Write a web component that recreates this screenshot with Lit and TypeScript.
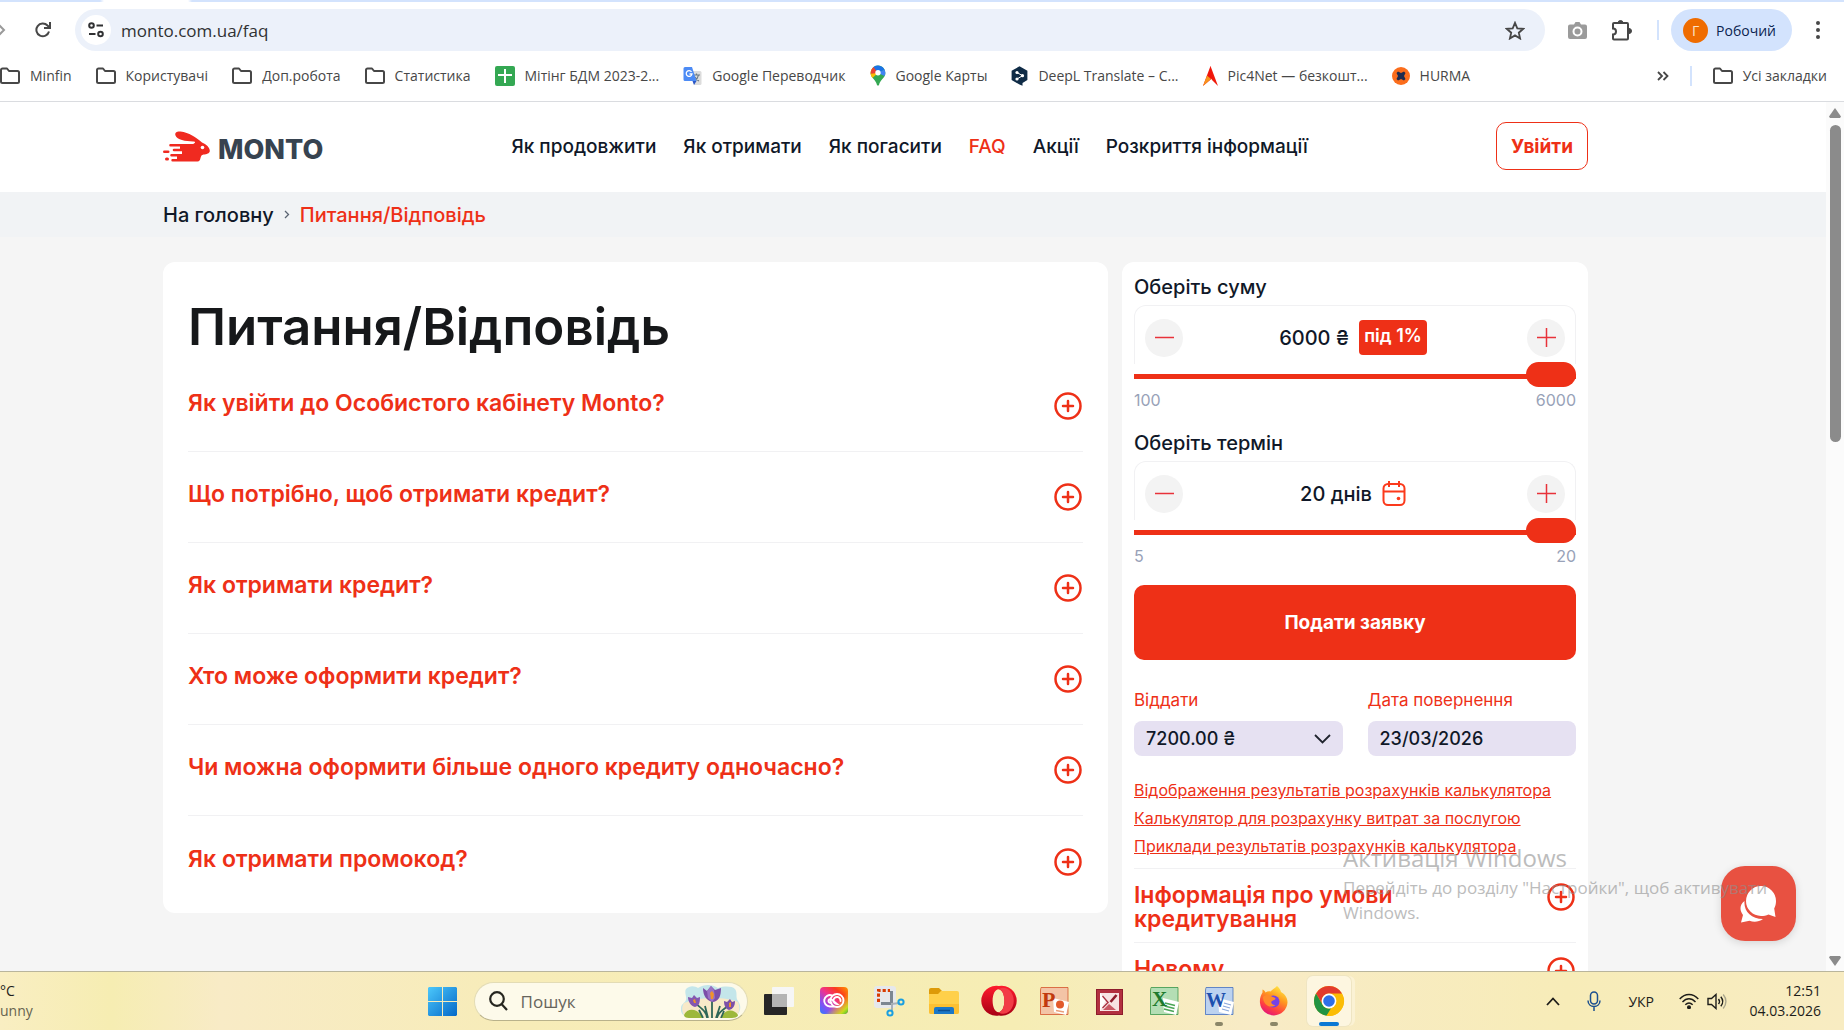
import { LitElement, html, css, svg } from "lit";
import { customElement, property } from "lit/decorators.js";

const folder = html`<svg width="20" height="18" viewBox="0 0 20 18" fill="none" stroke="#474747" stroke-width="2" stroke-linejoin="round"><path d="M1 14.500V3a1.500 1.500 0 0 1 1.500-1.500H7l2 2.500h8.500A1.500 1.500 0 0 1 19 5.500v9a1.500 1.500 0 0 1-1.500 1.500h-15A1.500 1.500 0 0 1 1 14.500z"/></svg>`;

const bookmarks = [
  { text: "Minfin", icon: folder },
  { text: "Користувачі", icon: folder },
  { text: "Доп.робота", icon: folder },
  { text: "Статистика", icon: folder },
  {
    text: "Мітінг БДМ 2023-2...",
    icon: html`<svg width="20" height="20" viewBox="0 0 20 20"><rect width="20" height="20" rx="2" fill="#34a853"/><path d="M9 3h2v5h6v2h-6v7H9v-7H3V8h6z" fill="#fff"/></svg>`,
  },
  {
    text: "Google Переводчик",
    icon: html`<svg width="19" height="20" viewBox="0 0 19 20"><path d="M8 5h9a1.500 1.500 0 0 1 1.500 1.500v11A1.500 1.500 0 0 1 17 19h-6z" fill="#dcdcdc"/><path d="M10 9h7M13.500 7.500V9M15.500 9c-.5 3-2.500 5-4 6M12 11c1 2 2.500 3.500 4 4" stroke="#6b7a86" stroke-width="1.200" fill="none"/><path d="M2 1h7l4.500 14H2A1.500 1.500 0 0 1 .5 13.500v-11A1.500 1.500 0 0 1 2 1z" fill="#4c8bf5"/><path d="M9.500 15h4L11 19z" fill="#2a56c6"/><path d="M8.500 5.800A2.900 2.900 0 1 0 9 8H6.500" stroke="#fff" stroke-width="1.300" fill="none"/></svg>`,
  },
  {
    text: "Google Карты",
    icon: html`<svg width="16" height="21" viewBox="0 0 16 21"><path d="M8 .5A7.400 7.400 0 0 1 15.400 8c0 5-5.200 6.500-6.400 12-.3.800-1.700.8-2 0C5.800 14.500.6 13 .6 8A7.400 7.400 0 0 1 8 .5z" fill="#34a853"/><path d="M2.400 3.200 8 8l-5.600 5C1.300 11.500.6 10 .6 8c0-1.800.7-3.500 1.800-4.800z" fill="#fbbc04"/><path d="M2.400 3.200A7.300 7.300 0 0 1 4 1.800L8 8l-7.300.8a8 8 0 0 1 1.700-5.600z" fill="#ea4335"/><path d="M3.600 2A7.400 7.400 0 0 1 14.500 4.500L8 8z" fill="#1a73e8"/><path d="M14.500 4.500c1.300 2.700.9 4.800 0 6.500L8 8z" fill="#4285f4"/><circle cx="8" cy="7.800" r="2.700" fill="#fff"/></svg>`,
  },
  {
    text: "DeepL Translate – C...",
    icon: html`<svg width="17" height="20" viewBox="0 0 17 20"><path d="M8.500.3 16.400 4.800v9.300L11.500 17v2.800L8.500 18.500.6 14V4.800z" fill="#0f2b46"/><path d="M6 6.500l5.500 3.200L6 13" stroke="#fff" stroke-width="1" fill="none"/><circle cx="6" cy="6.500" r="1.600" fill="#fff"/><circle cx="11.500" cy="9.700" r="1.600" fill="#fff"/><circle cx="6" cy="13" r="1.600" fill="#fff"/></svg>`,
  },
  {
    text: "Pic4Net — безкошт...",
    icon: html`<svg width="15" height="20" viewBox="0 0 15 20"><path d="M7.500 0 15 20l-6-6-3-6z" fill="#f01a0a"/><path d="M7.500 0 9.500 12 0 20z" fill="#f1140a"/><path d="M4 9.500 8 13 0 20z" fill="#f7941d"/></svg>`,
  },
  {
    text: "HURMA",
    icon: html`<svg width="18" height="18" viewBox="0 0 18 18"><circle cx="9" cy="9" r="9" fill="#fb6d1c"/><path d="M4.500 6 6 4.500l3 1.500 3-1.500L13.500 6 12 9l1.500 3-1.500 1.500L9 12l-3 1.500L4.500 12 6 9z" fill="#1d2b4f"/></svg>`,
  },
];

const officeDoc = (main: string, light: string) =>
  svg`<path d="M3 1h26v28H1V5z" fill="${light}"/><path d="M2 1.500h27v27H1.500V4z" fill="none" stroke="${main}" stroke-opacity=".7"/><path d="M14 12l16 4-3 13-12-3z" fill="#fff"/>`;

const apps = [
  {
    name: "Подання завдань",
    state: "",
    art: svg`<rect x="0" y="8" width="23" height="21" rx="1" fill="#262626"/><rect x="8" y="1" width="22" height="20" rx="1" fill="#f6f6f6"/><path d="M8 8h15v13H8z" fill="#b4b4b4"/>`,
  },
  {
    name: "Creative Cloud",
    state: "",
    art: svg`<defs><linearGradient id="cc" x1="0" y1="1" x2="1" y2="0"><stop offset="0" stop-color="#2f7bff"/><stop offset=".25" stop-color="#8a4df0"/><stop offset=".5" stop-color="#f0328c"/><stop offset=".75" stop-color="#fb3b1e"/><stop offset="1" stop-color="#ff9a00"/></linearGradient><linearGradient id="cc2" x1=".3" y1=".3" x2="1" y2="1"><stop offset=".4" stop-color="#ffd500" stop-opacity="0"/><stop offset=".8" stop-color="#c8dc1e"/><stop offset="1" stop-color="#35c435"/></linearGradient></defs><rect x="1" y="1" width="28" height="27" rx="4" fill="url(#cc)"/><rect x="1" y="1" width="28" height="27" rx="4" fill="url(#cc2)"/><g fill="none" stroke="#fff" stroke-width="1.900" stroke-linecap="round"><path d="M14.500 20.500H11a5.700 5.700 0 1 1 2-11"/><circle cx="18" cy="14.500" r="6.500"/><path d="M21.500 15a3.500 3.500 0 1 0-3.500 3l-5.500-4.500c-1.500-1-3.300.2-3 1.800.3 1.300 1.500 1.700 3 1.700"/></g>`,
  },
  {
    name: "Ножиці",
    state: "",
    art: svg`<rect x="0" y="0" width="22" height="22" rx="3" fill="#e6e8ec"/><path d="M4.500 16V4.500H16" fill="none" stroke="#d83b01" stroke-width="3" stroke-dasharray="3.200 2"/><path d="M17.500 5v13.500M7 17.500h12" stroke="#7c8691" stroke-width="3"/><path d="M17 18l9-1M18 17v8" stroke="#a8b0b8" stroke-width="2"/><circle cx="27" cy="16" r="2.600" fill="none" stroke="#1a9fe0" stroke-width="2"/><circle cx="16" cy="27" r="2.600" fill="none" stroke="#1a9fe0" stroke-width="2"/>`,
  },
  {
    name: "Провідник",
    state: "",
    art: svg`<path d="M0 4a2 2 0 0 1 2-2h8l3 3-3 4H0z" fill="#dd9a08"/><path d="M0 8h9l3-3h16a2 2 0 0 1 2 2v19a2 2 0 0 1-2 2H2a2 2 0 0 1-2-2z" fill="#ffd04a"/><path d="M0 18h30v8a2 2 0 0 1-2 2H2a2 2 0 0 1-2-2z" fill="#fcc032"/><path d="M5 28v-5a2 2 0 0 1 2-2h16a2 2 0 0 1 2 2v5z" fill="#1b78c8"/><path d="M9 24.500h12" stroke="#0c4f93" stroke-width="1.500"/>`,
  },
  {
    name: "Opera",
    state: "",
    art: svg`<defs><linearGradient id="op" x1="0" y1="0" x2="0" y2="1"><stop offset="0" stop-color="#ff1b2d"/><stop offset="1" stop-color="#a70014"/></linearGradient></defs><path fill-rule="evenodd" d="M15 0a15 15 0 1 0 0 29.500A15 15 0 1 0 15 0zM14.500 3.300c3.300 0 5.900 5 5.900 11.500s-2.600 11.500-5.900 11.500-5.900-5-5.900-11.500 2.600-11.500 5.900-11.500z" fill="url(#op)"/><path d="M14.500 3.300c3.500-2.500 8-2 11.500 1.500 5 5.500 5 14.500 0 20-3.500 3.500-8 4-11.500 1.500 3.300 0 5.900-5 5.900-11.500s-2.600-11.500-5.900-11.500z" fill="#f23c46"/>`,
  },
  {
    name: "PowerPoint",
    state: "",
    art: svg`${officeDoc("#d04a1c", "#f3c4a6")}<circle cx="21" cy="18.500" r="4" fill="#e2592a"/><path d="M17 24.500l8 1.500" stroke="#e9a07a" stroke-width="1.500"/><text x="3" y="21" font-size="22" class="office" fill="#c1390f">P</text>`,
  },
  {
    name: "Picture Manager",
    state: "",
    art: svg`<rect x="2" y="3" width="27" height="26" fill="#b23040"/><rect x="2.500" y="3.500" width="26" height="25" fill="none" stroke="#8e1c2c"/><rect x="6" y="7" width="19" height="18" fill="#f7e3e3"/><path d="M6 7l6 7-6 11z" fill="#fff"/><path d="M9 24l6-6 7 6z" fill="#c95a66"/><path d="M8.500 10l6 7M8.500 22l5-5" stroke="#a83040" stroke-width="1.300"/><path d="M22.500 9l-6 7" stroke="#8e1c2c" stroke-width="2.600"/>`,
  },
  {
    name: "Excel",
    state: "",
    art: svg`${officeDoc("#2f8d3c", "#b4deb4")}<path d="M16 17l10 2.500M15.500 20l10 2.500M15 23l10 2.500" stroke="#4aa556" stroke-width="1.500"/><text x="3" y="20" font-size="21" class="office" fill="#1d7a2d">X</text>`,
  },
  {
    name: "Word",
    state: "idle",
    art: svg`${officeDoc("#3a64b4", "#bcd2f0")}<path d="M20 17l7 2M19 20l7 2M18 23l7 2" stroke="#89a9dc" stroke-width="1.200"/><text x="2" y="21" font-size="20" class="office" fill="#1d4fae">W</text>`,
  },
  {
    name: "Firefox",
    state: "idle",
    art: svg`<defs><linearGradient id="ff" x1=".8" y1="0" x2=".3" y2="1"><stop offset="0" stop-color="#fff04a"/><stop offset=".4" stop-color="#ff9a1f"/><stop offset=".75" stop-color="#ff4040"/><stop offset="1" stop-color="#e2127d"/></linearGradient></defs><path d="M18 0c2 1.500 3.500 3.500 4 6 3 1.500 6.500 5 6.500 10.500A13.800 13.800 0 0 1 1 17C.5 12 2 9 3.500 6.500V3.500C5 4 6 5 6.500 6.500 8 5.500 10 5 11.500 5.500 13 3.500 15.500 2.500 18 0z" fill="url(#ff)"/><circle cx="14.500" cy="15.500" r="6" fill="#7542e5"/><path d="M4 11c3-3 8-2 9.500 0 2 0 3 1 3 2-1 1.500-3 1-4 2.500s1 4 4 3.500c-5 4-12.500 0-12.500-8z" fill="#ff8b2a"/>`,
  },
  {
    name: "Google Chrome",
    state: "active",
    art: svg`<circle cx="15" cy="15" r="15" fill="#fbbc04"/><path d="M2 7.500A15 15 0 0 1 28 7.500H15a7.500 7.500 0 0 0-6.500 11z" fill="#e33b2e"/><path d="M2 7.500 8.500 18.800A7.500 7.500 0 0 0 17 22.200L12.500 29.800A15 15 0 0 1 2 7.500z" fill="#229342"/><path d="M12.500 29.800 21.500 18.800A7.500 7.500 0 0 0 20 9.500L28.500 8.500A15 15 0 0 1 12.500 29.800z" fill="#fbbc04"/><circle cx="15" cy="15" r="7.400" fill="#fff"/><circle cx="15" cy="15" r="5.800" fill="#2f6fe8"/>`,
  },
];

const plusCircle = html`<svg class="plus-circle" width="28" height="28" viewBox="0 0 28 28" fill="none" stroke="#ee3017" stroke-width="2.500" stroke-linecap="round" aria-hidden="true"><circle cx="14" cy="14" r="12.500"/><path d="M14 9v10M9 14h10"/></svg>`;

@customElement("browser-bar")
class BrowserBar extends LitElement {
  static styles = css`
    :host { display: block; background: #fff; border-bottom: 1px solid #dadce0; color: #474747; font-family: "Open Sans", "Noto Sans", sans-serif; }
    svg { flex: none; display: block; }
    button, a { font: inherit; color: inherit; background: none; border: 0; padding: 0; text-decoration: none; }
    .tab-edge { height: 2px; background: linear-gradient(90deg, #d3e3fd 100px, #fff 104px 188px, #d3e3fd 192px); }
    .tools { display: flex; align-items: center; height: 48px; padding: 0 24px 0 0; margin-top: 4px; }
    .forward { width: 6px; margin-right: 29px; }
    .reload { margin-right: 24px; }
    .omnibox { flex: 1; display: flex; align-items: center; height: 42px; border-radius: 21px; background: #ecf1fa; padding: 0 20px 0 6px; }
    .site { display: grid; place-items: center; width: 30px; height: 30px; border-radius: 50%; background: #fff; }
    .address { flex: 1; min-width: 0; border: 0; background: none; padding: 0 0 0 10px; font: 17px "Open Sans", "Noto Sans", sans-serif; color: #303133; outline: 0; }
    .extras { display: flex; align-items: center; gap: 24px; margin-left: 23px; }
    .line { width: 2px; height: 20px; background: #d3e3fd; }
    .profile { display: flex; align-items: center; gap: 8px; height: 42px; padding: 0 16px 0 12px; margin-left: -12px; border-radius: 21px; background: #d3e3fd; color: #0b2350; font-size: 14px; }
    .avatar { display: grid; place-items: center; width: 25px; height: 25px; border-radius: 50%; background: #ef6c00; color: #fbe3cc; font-size: 14px; }
    .bookmarks { display: flex; align-items: center; box-sizing: border-box; height: 47px; padding: 0 17px 4px 0; font-size: 14px; }
    .list { display: flex; align-items: center; gap: 24px; flex: 1; min-width: 0; overflow: hidden; }
    .mark { display: flex; align-items: center; gap: 10px; white-space: nowrap; }
    .tail { display: flex; align-items: center; gap: 21px; }
  `;
  render() {
    return html`
      <div class="tab-edge"></div>
      <div class="tools">
        <svg class="forward" width="6" height="14" viewBox="0 0 6 14"><path d="M-2 1l6 6-6 6" fill="none" stroke="#9a9a9a" stroke-width="2"/></svg>
        <button class="reload" aria-label="Оновити"><svg width="16" height="16" viewBox="0 0 16 16" fill="none" stroke="#474747" stroke-width="2"><path d="M14 9.500A6.400 6.400 0 1 1 12.500 3.500L14.500 5.500"/><path d="M15 0v6H9"/></svg></button>
        <div class="omnibox">
          <button class="site" aria-label="Відомості про сайт"><svg width="16" height="16" viewBox="0 0 16 16" fill="none" stroke="#303133" stroke-width="2"><circle cx="3.500" cy="3.500" r="2.300"/><path d="M8.500 3.500H15M1 12h6.500"/><circle cx="12.500" cy="12" r="2.300"/></svg></button>
          <input class="address" aria-label="Адреса" value="monto.com.ua/faq" />
          <button aria-label="Додати закладку"><svg width="20" height="19" viewBox="0 0 20 19"><path d="M10 1.800l2.300 5.500 6 .5-4.500 3.900 1.300 5.800L10 14.400l-5.100 3.100 1.300-5.800L1.700 7.800l6-.5z" fill="none" stroke="#474747" stroke-width="1.800"/></svg></button>
        </div>
        <div class="extras">
          <svg width="19" height="18" viewBox="0 0 19 18"><path d="M2 3.500h4L7.500 1h4L13 3.500h4a2 2 0 0 1 2 2V16a2 2 0 0 1-2 2H2a2 2 0 0 1-2-2V5.500a2 2 0 0 1 2-2z" fill="#9b9b9b"/><circle cx="9.500" cy="10.500" r="4" fill="none" stroke="#fff" stroke-width="2"/></svg>
          <svg width="22" height="22" viewBox="0 0 22 22"><path d="M2 5a1 1 0 0 1 1-1h13a1 1 0 0 1 1 1v14.500a1 1 0 0 1-1 1H3a1 1 0 0 1-1-1V15.500c4 0 4-6 0-6z" fill="none" stroke="#474747" stroke-width="2"/><path d="M7 4a2.500 2.500 0 0 1 5 0zM18 9.500a2.500 2.500 0 0 1 0 5z" fill="#474747" stroke="#474747"/></svg>
          <span class="line"></span>
          <button class="profile"><span class="avatar">Г</span>Робочий</button>
          <button aria-label="Меню"><svg width="4" height="18" viewBox="0 0 4 18" fill="#474747"><circle cx="2" cy="2" r="2"/><circle cx="2" cy="9" r="2"/><circle cx="2" cy="16" r="2"/></svg></button>
        </div>
      </div>
      <nav class="bookmarks" aria-label="Закладки">
        <div class="list">${bookmarks.map((b) => html`<a class="mark" href="#">${b.icon}${b.text}</a>`)}</div>
        <div class="tail">
          <svg width="12" height="10" viewBox="0 0 12 10" fill="none" stroke="#474747" stroke-width="1.800"><path d="M1 1l4 4-4 4M6.500 1l4 4-4 4"/></svg>
          <span class="line"></span>
          <a class="mark" href="#">${folder}Усі закладки</a>
        </div>
      </nav>`;
  }
}

@customElement("site-header")
class SiteHeader extends LitElement {
  static styles = css`
    :host { display: block; background: #fff; font: 500 19px Inter, sans-serif; color: #101828; }
    a { color: inherit; text-decoration: none; }
    .bar { display: flex; align-items: center; justify-content: space-between; height: 90px; padding: 0 238px 2px 163px; box-sizing: border-box; }
    .logo { display: flex; align-items: flex-end; gap: 8px; color: #374350; font: 800 27px/24px Inter, sans-serif; }
    .links { display: flex; gap: 27px; white-space: nowrap; }
    .current { color: #ee3017; }
    .login { height: 48px; padding: 0 14px; border: 1px solid #ee3017; border-radius: 10px; background: #fff; color: #ee3017; font: 700 19px Inter, sans-serif; }
    .crumbs { display: flex; align-items: center; gap: 10px; height: 45px; padding: 0 163px; background: #f1f3f5; font-size: 20px; }
  `;
  render() {
    const links = ["Як продовжити", "Як отримати", "Як погасити", "FAQ", "Акції", "Розкриття інформації"];
    return html`
      <header class="bar">
        <a class="logo" href="#">
          <svg width="47" height="31" viewBox="0 0 47 31" fill="#f02a20"><path d="M12.500 4.500C11.500 1.500 14 .3 17.500.6 26 1.500 33 6.500 39 11.500c4 1.500 8 5 7.800 8.500-.3 2.600-3 3.200-6.300 3.600-1.800.3-2.500 1.500-3 3.500-.5 2.200-1 3.400-3 3.400H9.500a1.200 1.200 0 0 1 0-2.400H14v-2.600H8.500a1.300 1.300 0 0 1 0-2.600H19v-2.600H11a1.300 1.300 0 0 1 0-2.600h6V15.500H7.500a1.300 1.300 0 0 1 0-2.600H30c2-1 3-2 1-2.500C23 10.500 14 9 12.500 4.500z"/><rect x="0" y="19.500" width="6.500" height="2.600" rx="1.300"/><rect x="2" y="26.500" width="4" height="3" rx="1.500"/><circle cx="39.500" cy="16.500" r="1.800" fill="#fff"/></svg>
          <span>MONTO</span>
        </a>
        <nav class="links">${links.map((l) => html`<a href="#" class=${l === "FAQ" ? "current" : ""}>${l}</a>`)}</nav>
        <button class="login">Увійти</button>
      </header>
      <nav class="crumbs" aria-label="Навігація">
        <a href="#">На головну</a>
        <svg width="6" height="9" viewBox="0 0 6 9" fill="none" stroke="#5a6472" stroke-width="1.300"><path d="M1 1l3.500 3.500L1 8"/></svg>
        <a class="current" href="#">Питання/Відповідь</a>
      </nav>`;
  }
}

@customElement("faq-card")
class FaqCard extends LitElement {
  static styles = css`
    :host { display: block; box-sizing: border-box; padding: 36px 25px 6px; border-radius: 12px; background: #fff; font-family: Inter, sans-serif; }
    h1 { margin: 0 0 5px; font-size: 51px; font-weight: 600; line-height: 58px; color: #16181a; }
    .row { display: flex; align-items: center; justify-content: space-between; width: 100%; height: 91px; padding: 0 1px 0 0; border: 0; border-bottom: 1px solid #f1f1f3; background: none; text-align: left; color: #ee3017; font: 600 23px Inter, sans-serif; }
    .row:last-child { border-bottom: 0; }
    .row span { padding-bottom: 6px; }
    .plus-circle { flex: none; }
  `;
  render() {
    const questions = [
      "Як увійти до Особистого кабінету Monto?",
      "Що потрібно, щоб отримати кредит?",
      "Як отримати кредит?",
      "Хто може оформити кредит?",
      "Чи можна оформити більше одного кредиту одночасно?",
      "Як отримати промокод?",
    ];
    return html`<h1>Питання/Відповідь</h1>
      ${questions.map((q) => html`<button class="row" aria-expanded="false"><span>${q}</span>${plusCircle}</button>`)}`;
  }
}

@customElement("amount-picker")
class AmountPicker extends LitElement {
  @property() label = "";
  @property() text = "";
  @property({ type: Number }) min = 0;
  @property({ type: Number }) max = 0;
  @property() badge = "";
  static styles = css`
    :host { display: block; font: 500 20px Inter, sans-serif; color: #101828; }
    label { display: block; height: 32px; line-height: 28px; }
    .box { display: flex; align-items: center; justify-content: space-between; box-sizing: border-box; height: 59px; padding: 5px 10px 0; border: 1px solid #f1f1f3; border-bottom: 0; border-radius: 12px 12px 0 0; }
    .step { display: grid; place-items: center; width: 38px; height: 38px; padding: 0; border: 0; border-radius: 50%; background: #f3f3f3; }
    .value { display: flex; align-items: center; gap: 10px; padding-right: 4px; }
    .badge { height: 35px; padding: 0 5px; border-radius: 4px; background: #ee3017; color: #fff; font-weight: 600; font-size: 18px; line-height: 32px; }
    input { appearance: none; display: block; width: 100%; height: 25px; margin: 0; background: none; }
    input::-webkit-slider-runnable-track { height: 5px; background: #ee3017; }
    input::-webkit-slider-thumb { appearance: none; width: 50px; height: 25px; margin-top: -12px; border-radius: 13px; background: #ee3017; }
    .range { display: flex; justify-content: space-between; line-height: 22px; font-size: 16px; font-weight: 400; color: #98a2b8; }
  `;
  render() {
    const line = (d: string) => html`<svg width="19" height="19" viewBox="0 0 19 19" stroke="#e8323a" stroke-width="1.500" aria-hidden="true"><path d=${d}/></svg>`;
    return html`
      <label for="range">${this.label}</label>
      <div class="box">
        <button class="step" aria-label="Менше">${line("M0 9.500h19")}</button>
        <span class="value">${this.text}
          ${this.badge
            ? html`<span class="badge">${this.badge}</span>`
            : html`<svg width="24" height="25" viewBox="0 0 24 25" fill="none" stroke="#fb3a1c" stroke-width="2"><rect x="1.500" y="3" width="21" height="21" rx="4.500"/><path d="M2 10.500h20M7 0v6M17 0v6"/><circle cx="16.500" cy="17.500" r="1.800" fill="#fb3a1c" stroke="none"/></svg>`}
        </span>
        <button class="step" aria-label="Більше">${line("M0 9.500h19M9.500 0v19")}</button>
      </div>
      <input id="range" type="range" .min=${String(this.min)} .max=${String(this.max)} .value=${String(this.max)} />
      <div class="range"><span>${this.min}</span><span>${this.max}</span></div>`;
  }
}

@customElement("loan-card")
class LoanCard extends LitElement {
  static styles = css`
    :host { display: block; box-sizing: border-box; padding: 11px 12px; border-radius: 12px; background: #fff; color: #101828; font-family: Inter, sans-serif; }
    amount-picker { margin-bottom: 18px; }
    .apply { display: block; width: 100%; height: 75px; border: 0; border-radius: 10px; background: #ee3017; color: #fff; font: 700 19px Inter, sans-serif; }
    .fields { display: grid; grid-template-columns: 1fr 1fr; gap: 25px; margin-top: 28px; }
    label { display: block; height: 33px; line-height: 24px; font-size: 17px; color: #ee3017; }
    .control { position: relative; }
    .control svg { position: absolute; right: 12px; top: 13px; pointer-events: none; }
    select, input { appearance: none; display: block; box-sizing: border-box; width: 100%; height: 35px; padding: 0 12px; border: 0; border-radius: 8px; background: #e6e1f2; color: #101828; font: 500 18px Inter, sans-serif; }
    .docs { display: grid; gap: 4px; margin: 22px 0 10px; font-size: 16px; line-height: 24px; }
    .docs a { color: #ee3017; }
    .more { display: flex; justify-content: space-between; align-items: start; width: 100%; min-height: 74px; padding: 14px 1px 0 0; border: 0; border-top: 1px solid #f1f1f3; background: none; text-align: left; color: #ee3017; font: 600 23px/24px Inter, sans-serif; }
    .more span { max-width: 300px; }
  `;
  render() {
    return html`
      <amount-picker label="Оберіть суму" text="6000 ₴" min="100" max="6000" badge="під 1%"></amount-picker>
      <amount-picker label="Оберіть термін" text="20 днів" min="5" max="20"></amount-picker>
      <button class="apply">Подати заявку</button>
      <div class="fields">
        <div><label for="pay">Віддати</label>
          <div class="control"><select id="pay"><option>7200.00 ₴</option></select>
            <svg width="17" height="10" viewBox="0 0 17 10" fill="none" stroke="#20242e" stroke-width="1.800"><path d="M1 1l7.500 7.500L16 1"/></svg></div></div>
        <div><label for="date">Дата повернення</label><input id="date" value="23/03/2026" /></div>
      </div>
      <div class="docs">
        <a href="#">Відображення результатів розрахунків калькулятора</a>
        <a href="#">Калькулятор для розрахунку витрат за послугою</a>
        <a href="#">Приклади результатів розрахунків калькулятора</a>
      </div>
      <button class="more"><span>Інформація про умови кредитування</span>${plusCircle}</button>
      <button class="more"><span>Новому</span>${plusCircle}</button>`;
  }
}

@customElement("task-bar")
class TaskBar extends LitElement {
  static styles = css`
    :host { display: grid; grid-template-columns: minmax(0, 429fr) auto minmax(0, 489fr); align-items: center; height: 59px; box-sizing: border-box; border-top: 1px solid #b9b59c; background: linear-gradient(90deg, #f9eec2, #f6edb2 6%, #f8ebc6 12%, #f7ecb8 28%, #f6edb4 55%, #f8ebc6 68%, #f7ecb8 85%, #f8ecc2); font: 15px "Open Sans", "Noto Sans", sans-serif; color: #1d1d1a; }
    button { display: grid; place-items: center; padding: 0; border: 0; background: none; font: inherit; color: inherit; }
    .weather { line-height: 20px; font-size: 14px; }
    .weather div + div { color: #66634f; }
    .centre { display: flex; align-items: center; }
    .start { width: 30px; margin-right: 16px; }
    .search { display: flex; align-items: center; box-sizing: border-box; width: 274px; height: 39px; margin-right: 4px; padding: 0 6px 0 14px; border: 1px solid #e3dcb5; border-bottom-color: #b9b28b; border-radius: 20px; background: #fdfaea; }
    .search input { flex: 1; min-width: 0; padding: 0 0 0 13px; border: 0; outline: 0; background: none; font: 17px "Open Sans", "Noto Sans", sans-serif; }
    .search input::placeholder { color: #66645c; }
    .app { position: relative; width: 55px; height: 50px; border-radius: 6px; }
    .app svg { overflow: visible; }
    .active { width: 44px; margin: 0 6px 0 5px; background: #fdf6e0; box-shadow: 0 0 0 1px #efe5c2, 4px 0 0 #fbf2d4; }
    .active::after, .idle::after { content: ""; position: absolute; bottom: 0; left: 50%; width: 8px; height: 4px; margin-left: -4px; border-radius: 2px; background: #8b8668; }
    .active::after { width: 20px; margin-left: -10px; background: #0a78d4; }
    .office { font-family: "Liberation Serif", serif; font-weight: 700; }
    .tray { display: flex; align-items: center; justify-content: flex-end; padding-right: 23px; }
    .chevron { margin-right: 27px; }
    .mic { margin-right: 27px; }
    .lang { margin-right: 25px; font-size: 14px; }
    .wifi { margin-right: 8px; }
    .sound { margin-right: 20px; }
    .clock { width: 74px; text-align: right; line-height: 20px; white-space: nowrap; font-size: 14px; justify-items: end; }
  `;
  render() {
    return html`
      <div class="weather"><div>°C</div><div>unny</div></div>
      <div class="centre">
        <button class="start" aria-label="Пуск"><svg width="30" height="29" viewBox="0 0 30 29"><defs><linearGradient id="w" x1="0" y1="0" x2="1" y2="1"><stop offset="0" stop-color="#4cc8fb"/><stop offset="1" stop-color="#0468c8"/></linearGradient></defs><path d="M1 0h13v14H0V1zM15 0h13l1 1v13H15zM0 15h14v14H1l-1-1zM15 15h14v13l-1 1H15z" fill="url(#w)"/></svg></button>
        <div class="search">
          <svg width="19" height="20" viewBox="0 0 19 20" fill="none" stroke="#26261f" stroke-width="2.200"><circle cx="8" cy="8" r="6.800"/><path d="M12.500 13l5.500 6"/></svg>
          <input type="search" aria-label="Пошук" placeholder="Пошук" />
          <svg width="60" height="33" viewBox="0 0 60 33">
            <path d="M5 4c4-4 9-3 12-1 6-4 14-4 20 0 6-2 14-2 17 1 3 4 0 8 3 12s3 9 0 13c-2 4-8 3-12 3H8c-5 0-9-4-8-9 0-4 4-5 5-8S3 7 5 4z" fill="#c4e6ea"/><path d="M3 18c14-6 40-7 54-1 2 5 2 10-1 13-3 3-8 3-12 3H8C2 33-1 24 3 18z" fill="#f8e9c8"/>
            <path d="M3 30c3-7 12-7 17 0l2 3H8c-3 0-5-1-5-3zM40 33c3-9 13-10 17-3 0 2-3 3-6 3z" fill="#9cb83a"/>
            <path d="M31 16v17M26 33c0-6-5-9-12-15M36 33c1-6 6-8 11-12M22 33l-4-8M27 33l-3-12M35 33l4-12M40 33l3-7" stroke="#2e6657" stroke-width="1.800" fill="none"/>
            <path d="M22 3l4 3 4-5 4 4 6-2c0 8-2 13-8 14-6-1-10-6-10-14z" fill="#7c4fa8"/><path d="M26 6l4-5 3 4 1 8-3 4-4-4z" fill="#9a72c4"/><path d="M29 8l2-2 2 3-1 5h-2z" fill="#f0932b"/>
            <path d="M7 12l4 1 2-3 3 3 3-1c0 6-1 9-5 10-4-1-7-5-7-10z" fill="#8458b0"/><path d="M12 15l2-1 1 4h-2z" fill="#f0932b"/>
            <path d="M43 16l3 1 3-3 2 3 3-1c0 5-2 8-6 9-3-1-5-4-5-9z" fill="#7c4fa8"/><path d="M48 18l2-1v5h-2z" fill="#f0932b"/>
          </svg>
        </div>
        ${apps.map((a) => html`<button class="app ${a.state}" aria-label=${a.name}><svg width="30" height="30" viewBox="0 0 30 30">${a.art}</svg></button>`)}
      </div>
      <div class="tray">
        <button class="chevron" aria-label="Приховані піктограми"><svg width="14" height="9" viewBox="0 0 14 9" fill="none" stroke="#1d1d1a" stroke-width="1.800"><path d="M1 8l6-6.500L13 8"/></svg></button>
        <button class="mic" aria-label="Мікрофон"><svg width="14" height="20" viewBox="0 0 14 20" fill="none" stroke="#1b4f8f" stroke-width="1.500"><rect x="3.500" y="1" width="7" height="12" rx="3.500"/><path d="M1 9.500c0 8 12 8 12 0M7 15.500V20"/></svg></button>
        <button class="lang">УКР</button>
        <button class="wifi" aria-label="Мережа"><svg width="20" height="16" viewBox="0 0 20 16" fill="none" stroke="#1d1d1a" stroke-width="1.400"><path d="M.7 6c5.300-6 13.300-6 18.600 0M3.500 9c4-4.300 9-4.300 13 0M6.300 11.800c2.400-2.400 5-2.400 7.400 0"/><circle cx="10" cy="14.200" r="1.300" fill="#1d1d1a"/></svg></button>
        <button class="sound" aria-label="Гучність"><svg width="20" height="17" viewBox="0 0 20 17" fill="none" stroke="#1d1d1a" stroke-width="1.400"><path d="M1 5.500h3.500L9 1.500v14L4.500 11.500H1z"/><path d="M11.500 6c1.200 1.500 1.200 3.500 0 5M13.800 3.800c2.400 2.900 2.400 6.500 0 9.400"/><path d="M16.200 1.500c3.600 4.200 3.600 9.800 0 14" stroke="#aaa68c"/></svg></button>
        <button class="clock"><span>12:51</span><span>04.03.2026</span></button>
      </div>`;
  }
}

@customElement("app-root")
class AppRoot extends LitElement {
  static styles = css`
    :host { display: grid; grid-template-rows: auto minmax(0, 1fr) auto; height: 100vh; position: relative; overflow: hidden; background: #f5f5f5; }
    .window { display: flex; min-height: 0; overflow: hidden; }
    .page { flex: 1; min-width: 0; }
    .columns { display: grid; grid-template-columns: minmax(0, 945fr) minmax(0, 466fr); align-items: start; gap: 14px; padding: 25px 238px 0 163px; }
    .scroll { display: flex; flex-direction: column; align-items: center; box-sizing: border-box; width: 18px; padding: 6px 0 5px; background: #fbfbfb; }
    .thumb { width: 11px; height: 37%; margin-top: 7px; margin-bottom: auto; border-radius: 6px; background: #8b8b8b; }
    .chat { position: absolute; right: 48px; bottom: 89px; display: grid; place-items: center; width: 75px; height: 75px; padding: 0; border: 0; border-radius: 24px; background: #e85141; box-shadow: 0 2px 8px #0002; }
    .watermark { position: absolute; right: 61px; bottom: 105px; width: 440px; color: #909090; opacity: .6; font: 17px/25px "Open Sans", "Noto Sans", sans-serif; pointer-events: none; }
    .watermark p { margin: 0; }
    .watermark .big { font-size: 24px; line-height: 34px; }
  `;
  render() {
    return html`
      <browser-bar></browser-bar>
      <div class="window">
        <div class="page">
          <site-header></site-header>
          <main class="columns"><faq-card></faq-card><loan-card></loan-card></main>
        </div>
        <div class="scroll" aria-hidden="true">
          <svg width="12" height="10" viewBox="0 0 12 10"><path d="M6 0l6 8.500L11 10H1L0 8.500z" fill="#8b8b8b"/></svg>
          <div class="thumb"></div>
          <svg width="12" height="10" viewBox="0 0 12 10"><path d="M6 10l6-8.500L11 0H1L0 1.500z" fill="#8b8b8b"/></svg>
        </div>
      </div>
      <task-bar></task-bar>
      <button class="chat" aria-label="Чат"><svg width="37" height="38" viewBox="0 0 37 38" fill="#fff"><path d="M21 1a15 15 0 0 1 15 15c0 3-.6 5-1.800 7.500L35.500 32l-7-2.500C26 31 24 31 21 31a15 15 0 0 1 0-30z"/><path d="M4.500 16C3.500 26 11 34 23 34c-4 3-9 3.500-13.500 1.800L1 37.500 3 30C-1 25 0 19 4.500 16z"/></svg></button>
      <div class="watermark"><p class="big">Активація Windows</p><p>Перейдіть до розділу "Настройки", щоб активувати Windows.</p></div>`;
  }
}
